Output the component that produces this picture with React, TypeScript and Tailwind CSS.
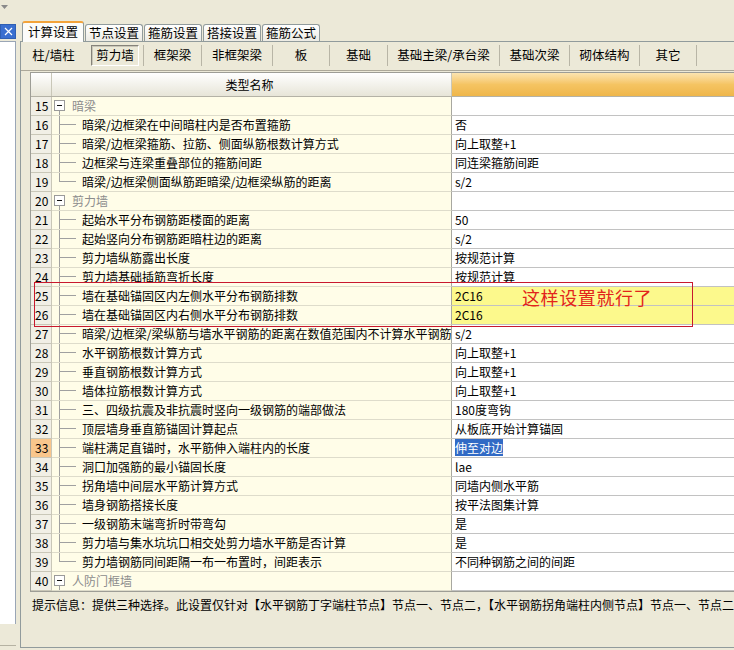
import React from "react";

type Kind = "group" | "child" | "last";

type Row = {
  n: number;
  name: string;
  value: string;
  kind: Kind;
};

const rows: Row[] = [
  { n: 15, name: "暗梁", value: "", kind: "group" },
  { n: 16, name: "暗梁/边框梁在中间暗柱内是否布置箍筋", value: "否", kind: "child" },
  { n: 17, name: "暗梁/边框梁箍筋、拉筋、侧面纵筋根数计算方式", value: "向上取整+1", kind: "child" },
  { n: 18, name: "边框梁与连梁重叠部位的箍筋间距", value: "同连梁箍筋间距", kind: "child" },
  { n: 19, name: "暗梁/边框梁侧面纵筋距暗梁/边框梁纵筋的距离", value: "s/2", kind: "last" },
  { n: 20, name: "剪力墙", value: "", kind: "group" },
  { n: 21, name: "起始水平分布钢筋距楼面的距离", value: "50", kind: "child" },
  { n: 22, name: "起始竖向分布钢筋距暗柱边的距离", value: "s/2", kind: "child" },
  { n: 23, name: "剪力墙纵筋露出长度", value: "按规范计算", kind: "child" },
  { n: 24, name: "剪力墙基础插筋弯折长度", value: "按规范计算", kind: "child" },
  { n: 25, name: "墙在基础锚固区内左侧水平分布钢筋排数", value: "2C16", kind: "child" },
  { n: 26, name: "墙在基础锚固区内右侧水平分布钢筋排数", value: "2C16", kind: "child" },
  { n: 27, name: "暗梁/边框梁/梁纵筋与墙水平钢筋的距离在数值范围内不计算水平钢筋", value: "s/2", kind: "child" },
  { n: 28, name: "水平钢筋根数计算方式", value: "向上取整+1", kind: "child" },
  { n: 29, name: "垂直钢筋根数计算方式", value: "向上取整+1", kind: "child" },
  { n: 30, name: "墙体拉筋根数计算方式", value: "向上取整+1", kind: "child" },
  { n: 31, name: "三、四级抗震及非抗震时竖向一级钢筋的端部做法", value: "180度弯钩", kind: "child" },
  { n: 32, name: "顶层墙身垂直筋锚固计算起点", value: "从板底开始计算锚固", kind: "child" },
  { n: 33, name: "端柱满足直锚时，水平筋伸入端柱内的长度", value: "伸至对边", kind: "child" },
  { n: 34, name: "洞口加强筋的最小锚固长度", value: "lae", kind: "child" },
  { n: 35, name: "拐角墙中间层水平筋计算方式", value: "同墙内侧水平筋", kind: "child" },
  { n: 36, name: "墙身钢筋搭接长度", value: "按平法图集计算", kind: "child" },
  { n: 37, name: "一级钢筋末端弯折时带弯勾", value: "是", kind: "child" },
  { n: 38, name: "剪力墙与集水坑坑口相交处剪力墙水平筋是否计算", value: "是", kind: "child" },
  { n: 39, name: "剪力墙钢筋同间距隔一布一布置时，间距表示", value: "不同种钢筋之间的间距", kind: "last" },
  { n: 40, name: "人防门框墙", value: "", kind: "group" },
];

const mainTabs = ["计算设置", "节点设置", "箍筋设置", "搭接设置", "箍筋公式"];

const subTabs = [
  { label: "柱/墙柱", cls: "w-[63px] mr-[6px]" },
  { label: "剪力墙", cls: "w-[48px] mr-[4px] h-[21px] border-t border-l border-[#85827a] border-b border-r border-b-white border-r-white shadow-[inset_1px_1px_0_#c9c6b8]" },
  { label: "框架梁", cls: "w-[58px] border-l border-[#b8b5a6]" },
  { label: "非框架梁", cls: "w-[71px] border-l border-[#b8b5a6]" },
  { label: "板", cls: "w-[57px] border-l border-[#b8b5a6]" },
  { label: "基础", cls: "w-[58px] border-l border-[#b8b5a6]" },
  { label: "基础主梁/承台梁", cls: "w-[112px] border-l border-[#b8b5a6]" },
  { label: "基础次梁", cls: "w-[70px] border-l border-[#b8b5a6]" },
  { label: "砌体结构", cls: "w-[70px] border-l border-[#b8b5a6]" },
  { label: "其它", cls: "w-[58px] border-l border-r border-[#b8b5a6]" },
];

const TreeMark = ({ kind }: { kind: Kind }) => {
  if (kind === "group") {
    return (
      <svg width="20" height="18" className="shrink-0">
        <rect x="2.5" y="3.5" width="10" height="10" fill="#fff" stroke="#9a9a9a" />
        <line x1="5" y1="8.5" x2="10" y2="8.5" stroke="#111" />
        <line x1="7.5" y1="14" x2="7.5" y2="18" stroke="#a0a0a0" />
      </svg>
    );
  }
  return (
    <svg width="30" height="18" className="shrink-0">
      <line x1="7.5" y1="0" x2="7.5" y2={kind === "last" ? 9 : 18} stroke="#a0a0a0" />
      <line x1="7.5" y1="8.5" x2="24" y2="8.5" stroke="#a0a0a0" />
    </svg>
  );
};

const GridRow = ({ row }: { row: Row }) => {
  const yellow = row.n === 25 || row.n === 26;
  return (
    <div className="flex h-[19px]">
      <div
        className={`w-[21px] shrink-0 border-r border-b border-[#c9c7b8] pl-[4px] leading-[18px] ${
          row.n === 33 ? "bg-[#f9c68c]" : "bg-[#f1efe6]"
        }`}
      >
        {row.n}
      </div>
      <div className="w-[400px] shrink-0 flex items-start overflow-hidden whitespace-nowrap border-r border-r-[#a8a8a0] border-b border-b-[#dedccb] bg-[#fffde8] leading-[18px]">
        <TreeMark kind={row.kind} />
        <span className={row.kind === "group" ? "text-[#8c8c8c]" : "text-black"}>{row.name}</span>
      </div>
      <div
        className={`flex-1 border-b border-[#c2c2c2] pl-[3px] leading-[18px] whitespace-nowrap ${
          yellow ? "bg-[#fcf98c]" : "bg-white"
        }`}
      >
        {row.n === 33 ? (
          <span className="bg-[#316ac5] text-white">{row.value}</span>
        ) : (
          row.value
        )}
      </div>
    </div>
  );
};

export default function App() {
  return (
    <div className="relative flex h-[650px] w-[734px] overflow-hidden bg-[#ece9d8] text-[12px] text-black font-['Noto_Sans_CJK_SC','Liberation_Sans',sans-serif]">
      {/* left strip */}
      <div className="flex w-[16px] shrink-0 flex-col">
        <div className="h-[24px] pl-[1px] pt-[5px]">
          <svg width="8" height="5">
            <path d="M0 0 L7 0 L3.5 4 Z" fill="#8a8a8a" />
          </svg>
        </div>
        <div className="flex h-[15px] items-center justify-center border border-[#2f5fb3] bg-[#3a6fd0]">
          <svg width="9" height="9">
            <path d="M1 1 L8 8 M8 1 L1 8" stroke="#fff" strokeWidth="1.2" />
          </svg>
        </div>
        <div className="mt-[2px] h-[583px] border-t border-r border-[#9aa6b6] bg-white" />
        <div className="h-[22px] border-b border-[#b5b2a2]" />
      </div>

      {/* main */}
      <div className="flex flex-1 flex-col pl-[4px]">
        <div className="h-[21px]" />
        <div className="flex h-[20px] items-end gap-[1px] pl-[2px]">
          {mainTabs.map((t, i) =>
            i === 0 ? (
              <div
                key={t}
                className="relative z-10 -mb-px flex h-[21px] w-[62px] items-center justify-center rounded-t-[3px] border-x border-[#919b9c] border-t-2 border-t-[#f3a33a] bg-[#fcfcfa] text-[12.5px]"
              >
                {t}
              </div>
            ) : (
              <div
                key={t}
                className="flex h-[17px] w-[58px] items-center justify-center rounded-t-[3px] border-x border-t border-[#919b9c] bg-gradient-to-b from-white to-[#ecebe4] text-[12.5px]"
              >
                {t}
              </div>
            )
          )}
        </div>

        <div className="flex flex-1 flex-col border-t border-l border-b border-[#919b9c] pl-[9px] mb-[2px]">
          <div className="-ml-[8px] mt-[1px] flex h-[24px] items-center">
            {subTabs.map((s) => (
              <div key={s.label} className={`flex h-[21px] shrink-0 items-center justify-center text-[12.5px] ${s.cls}`}>
                {s.label}
              </div>
            ))}
          </div>
          <div className="-ml-[9px] h-[4px] border-b border-[#aca899]" />

          {/* grid */}
          <div className="mt-[1px] border-t border-l border-b border-[#9d9d96]">
            <div className="flex h-[24px] border-b border-[#b4b2a6]">
              <div className="w-[21px] shrink-0 border-r border-[#c9c7b8] bg-gradient-to-b from-white to-[#e7e5d8]" />
              <div className="flex w-[400px] shrink-0 items-center justify-center border-r border-[#c9c7b8] bg-gradient-to-b from-white to-[#e7e5d8] pr-[4px]">
                类型名称
              </div>
              <div className="flex-1 bg-gradient-to-b from-[#fbe4b0] via-[#f5c462] to-[#efb64a]" />
            </div>
            {rows.map((r) => (
              <GridRow key={r.n} row={r} />
            ))}
          </div>

          <div className="mt-[6px] overflow-hidden whitespace-nowrap pl-[2px] text-[12px] leading-[14px]">
            提示信息：提供三种选择。此设置仅针对【水平钢筋丁字端柱节点】节点一、节点二，【水平钢筋拐角端柱内侧节点】节点一、节点二
          </div>
        </div>
      </div>

      {/* annotation */}
      <div className="absolute left-[34px] top-[282px] h-[45px] w-[659px] border border-[#c8182e]" />
      <div className="absolute left-[522px] top-[285px] text-[18px] leading-[24px] tracking-[0.6px] text-[#e2231b]">
        这样设置就行了
      </div>
    </div>
  );
}
